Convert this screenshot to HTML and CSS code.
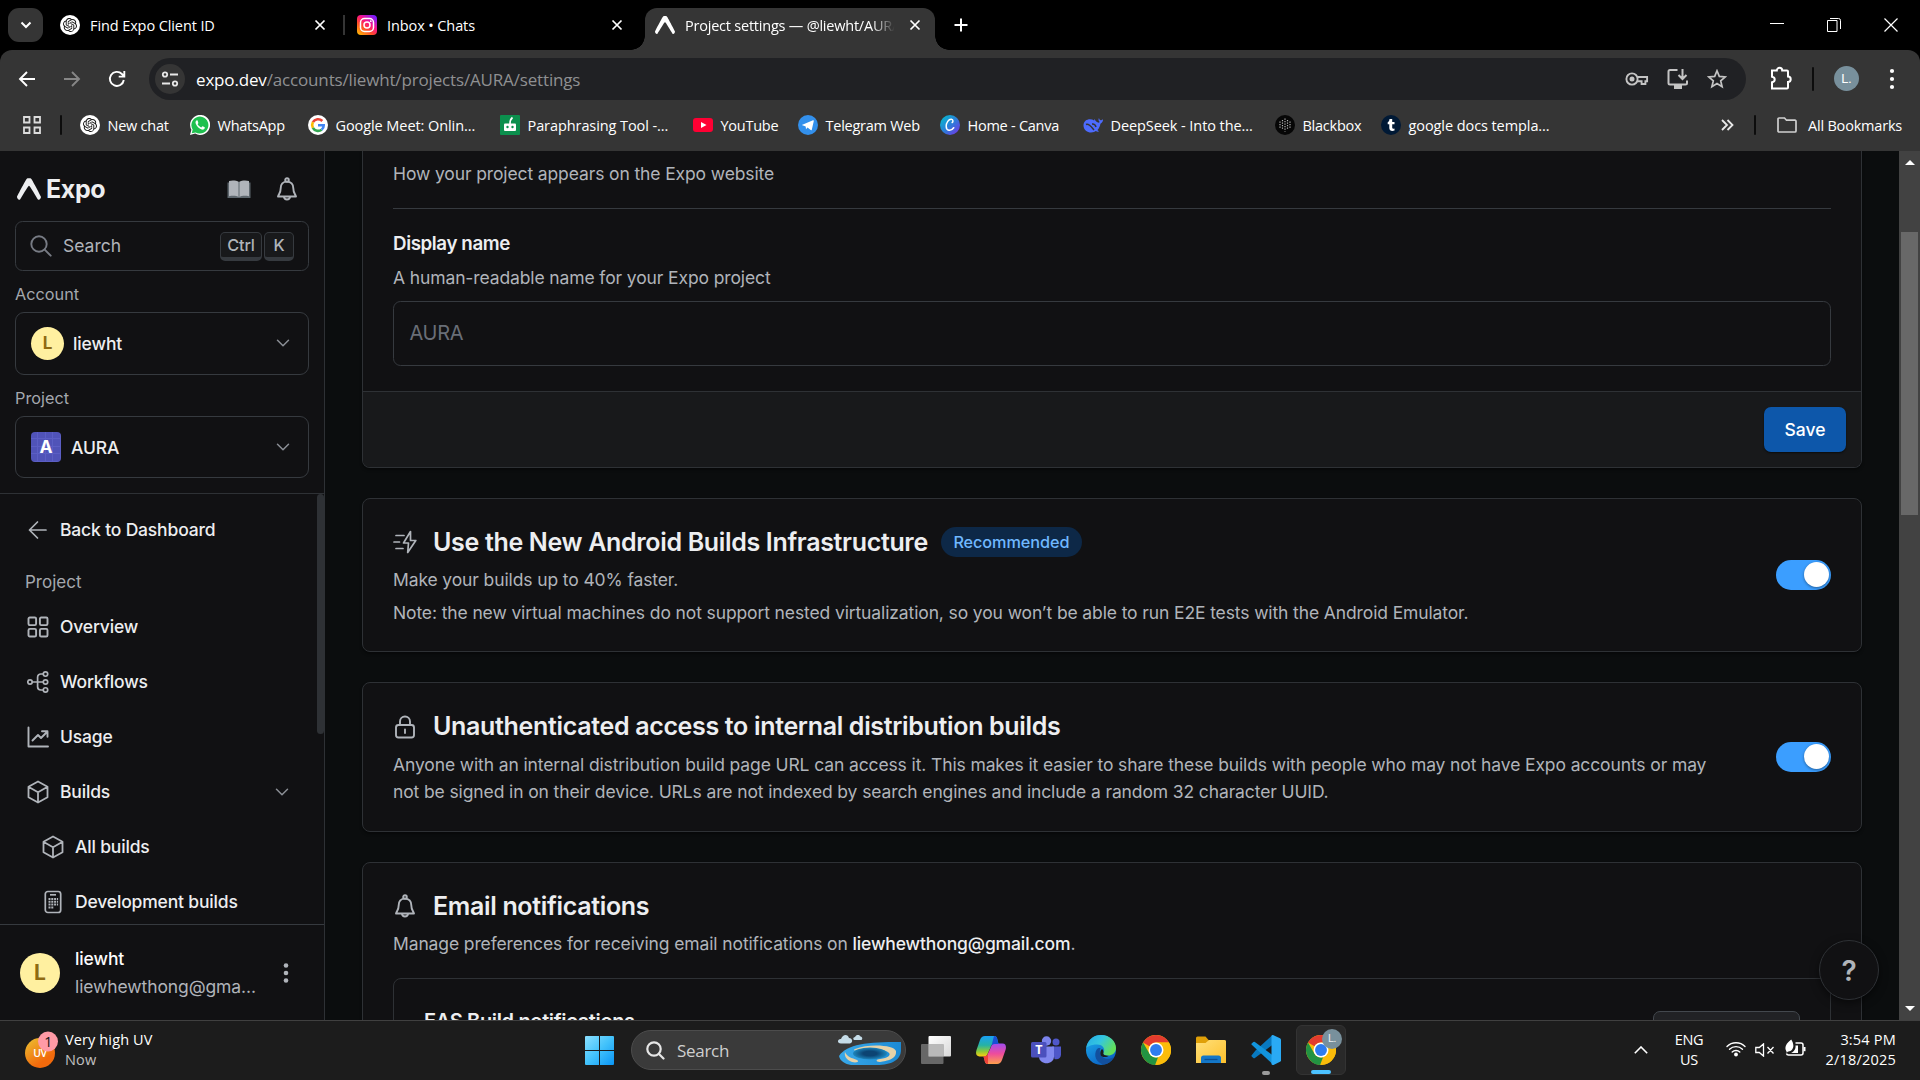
FILE: index.html
```html
<!DOCTYPE html>
<html lang="en">
<head>
<meta charset="utf-8">
<title>Project settings — @liewht/AURA</title>
<link rel="stylesheet" href="styles.css">
</head>
<body>
<svg class="defs" width="0" height="0">
  <defs>
    <linearGradient id="g-ig" x1="0" y1="1" x2=".8" y2="0"><stop offset="0" stop-color="#ffc800"/><stop offset=".4" stop-color="#ff4a2a"/><stop offset=".65" stop-color="#f8128a"/><stop offset="1" stop-color="#7a1cff"/></linearGradient>
    <linearGradient id="g-canva" x1="0" y1="0" x2="1" y2="1"><stop offset="0" stop-color="#00c4cc"/><stop offset=".5" stop-color="#2a7fd8"/><stop offset="1" stop-color="#7d2ae8"/></linearGradient>
    <linearGradient id="g-uv" x1="0" y1="0" x2=".7" y2="1"><stop offset="0" stop-color="#ebc332"/><stop offset=".8" stop-color="#f26a0c"/></linearGradient>
    <linearGradient id="g-win" x1="0" y1="0" x2="1" y2="1"><stop offset="0" stop-color="#8be0ff"/><stop offset=".5" stop-color="#42c2fb"/><stop offset="1" stop-color="#0a95f5"/></linearGradient>
    <linearGradient id="g-cl" x1="0" y1="0" x2="0" y2="1"><stop offset="0" stop-color="#19a0f5"/><stop offset=".45" stop-color="#25b2a5"/><stop offset=".75" stop-color="#8ccb38"/><stop offset="1" stop-color="#ffcd0f"/></linearGradient>
    <linearGradient id="g-cr" x1="0" y1="0" x2="0" y2="1"><stop offset="0" stop-color="#a04cf0"/><stop offset=".5" stop-color="#ee4c9c"/><stop offset="1" stop-color="#ffa04c"/></linearGradient>
    <linearGradient id="g-edge" x1="0" y1="0" x2="1" y2=".5"><stop offset="0" stop-color="#25a9e8"/><stop offset=".5" stop-color="#34c6e0"/><stop offset="1" stop-color="#63e05a"/></linearGradient>
    <linearGradient id="g-edge2" x1="0" y1="0" x2=".6" y2="1"><stop offset="0" stop-color="#1db0ee"/><stop offset="1" stop-color="#0b62c4"/></linearGradient>
    <linearGradient id="g-folder" x1="0" y1="0" x2="1" y2="1"><stop offset="0" stop-color="#ffe07a"/><stop offset="1" stop-color="#fdc02c"/></linearGradient>
    <linearGradient id="g-tv" x1="0" y1="0" x2="1" y2="1"><stop offset="0" stop-color="#fff"/><stop offset="1" stop-color="#d8d8d8"/></linearGradient>
    <linearGradient id="g-sea" x1="0" y1="0" x2="1" y2="0"><stop offset="0" stop-color="#39a9ea"/><stop offset="1" stop-color="#1c8ad4"/></linearGradient>
    <radialGradient id="g-hole"><stop offset=".4" stop-color="#0c4473"/><stop offset="1" stop-color="#1d86bd"/></radialGradient>
    <symbol id="openai" viewBox="0 0 20 20"><circle cx="10" cy="10" r="10" fill="#fff"/><path transform="translate(3 3) scale(.583)" fill="#111" d="M22.2819 9.8211a5.9847 5.9847 0 0 0-.5157-4.9108 6.0462 6.0462 0 0 0-6.5098-2.9A6.0651 6.0651 0 0 0 4.9807 4.1818a5.9847 5.9847 0 0 0-3.9977 2.9 6.0462 6.0462 0 0 0 .7427 7.0966 5.98 5.98 0 0 0 .511 4.9107 6.051 6.051 0 0 0 6.5146 2.9001A5.9847 5.9847 0 0 0 13.2599 24a6.0557 6.0557 0 0 0 5.7718-4.2058 5.9894 5.9894 0 0 0 3.9977-2.9001 6.0557 6.0557 0 0 0-.7475-7.0729zm-9.022 12.6081a4.4755 4.4755 0 0 1-2.8764-1.0408l.1419-.0804 4.7783-2.7582a.7948.7948 0 0 0 .3927-.6813v-6.7369l2.02 1.1686a.071.071 0 0 1 .038.052v5.5826a4.504 4.504 0 0 1-4.4945 4.4944zm-9.6607-4.1254a4.4708 4.4708 0 0 1-.5346-3.0137l.142.0852 4.783 2.7582a.7712.7712 0 0 0 .7806 0l5.8428-3.3685v2.3324a.0804.0804 0 0 1-.0332.0615L9.74 19.9502a4.4992 4.4992 0 0 1-6.1408-1.6464zM2.3408 7.8956a4.485 4.485 0 0 1 2.3655-1.9728V11.6a.7664.7664 0 0 0 .3879.6765l5.8144 3.3543-2.0201 1.1685a.0757.0757 0 0 1-.071 0l-4.8303-2.7865A4.504 4.504 0 0 1 2.3408 7.872zm16.5963 3.8558L13.1038 8.364 15.1192 7.2a.0757.0757 0 0 1 .071 0l4.8303 2.7913a4.4944 4.4944 0 0 1-.6765 8.1042v-5.6772a.79.79 0 0 0-.407-.667zm2.0107-3.0231l-.142-.0852-4.7735-2.7818a.7759.7759 0 0 0-.7854 0L9.409 9.2297V6.8974a.0662.0662 0 0 1 .0284-.0615l4.8303-2.7866a4.4992 4.4992 0 0 1 6.6802 4.66zM8.3065 12.863l-2.02-1.1638a.0804.0804 0 0 1-.038-.0567V6.0742a4.4992 4.4992 0 0 1 7.3757-3.4537l-.142.0805L8.704 5.459a.7948.7948 0 0 0-.3927.6813zm1.0976-2.3654l2.602-1.4998 2.6069 1.4998v2.9994l-2.5974 1.4997-2.6067-1.4997Z"/></symbol>
    <symbol id="expo" viewBox="0 0 24 24"><path fill="currentColor" d="M0 20.084c.043.53.23 1.063.718 1.778.58.849 1.576 1.315 2.303.567.49-.505 5.794-9.776 8.35-13.29a.761.761 0 0 1 1.248 0c2.556 3.514 7.86 12.785 8.35 13.29.727.748 1.723.282 2.303-.567.57-.835.728-1.42.728-2.046 0-.426-8.26-15.798-9.092-17.078-.8-1.23-1.044-1.498-2.397-1.542h-1.032c-1.353.044-1.597.311-2.398 1.542C8.267 3.991.33 18.758 0 19.77Z"/></symbol>
    <symbol id="x" viewBox="0 0 12 12"><path d="M1.5 1.5l9 9M10.5 1.5l-9 9" fill="none" stroke="currentColor" stroke-width="1.7"/></symbol>
    <symbol id="chev" viewBox="0 0 14 14"><path d="M1.5 4.3l5.5 5.4 5.5-5.4" fill="none" stroke="currentColor" stroke-width="1.5" stroke-linecap="round" stroke-linejoin="round"/></symbol>
    <symbol id="bell" viewBox="0 0 24 24"><g fill="none" stroke="currentColor" stroke-width="1.9" stroke-linejoin="round" stroke-linecap="round"><circle cx="12" cy="3" r="1.8"/><path d="M12 4.6c-4 0-6.3 2.8-6.3 6.6 0 4.400-1.700 5.600-2.700 8.300h18c-1-2.700-2.700-3.900-2.700-8.300 0-3.800-2.300-6.600-6.300-6.600zM8.800 19.700c.300 1.900 1.600 2.800 3.200 2.800s2.900-.900 3.200-2.800"/></g></symbol>
    <symbol id="cube" viewBox="0 0 22 24"><path d="M11 1.500l9.500 5.300v10.400L11 22.500l-9.500-5.300V6.800zM1.800 7L11 12.200 20.200 7M11 12.200v10" fill="none" stroke="currentColor" stroke-width="1.800" stroke-linejoin="round"/></symbol>
    <symbol id="chrome" viewBox="0 0 48 48"><circle cx="24" cy="24" r="24" fill="#fbbc0a"/><path fill="#e33b2e" d="M24 0a24 24 0 0 1 20.800 12H24a12 12 0 0 0-10.400 6L3.200 12A24 24 0 0 1 24 0z"/><path fill="#229342" d="M3.200 12l10.400 18A12 12 0 0 0 24 36c1.200 0 2.300-.1 3.300-.5L22.500 48A24 24 0 0 1 3.200 12z"/><path fill="#fbbc0a" d="M24 12h20.800A24 24 0 0 1 24 48l10.400-18a12 12 0 0 0 0-12z"/><circle cx="24" cy="24" r="12" fill="#fff"/><circle cx="24" cy="24" r="9.500" fill="#2e7cf0"/></symbol>
  </defs>
</svg>

<header class="tabstrip">
  <div class="tab-search"><svg width="12" height="12" viewBox="0 0 12 12"><path d="M1.500 3.500L6 8l4.500-4.500" fill="none" stroke="#fff" stroke-width="2"/></svg></div>
  <div class="tab tab-one"><svg class="fav"><use href="#openai"/></svg><span class="tab-title">Find Expo Client ID</span><svg class="tab-x"><use href="#x"/></svg></div>
  <div class="tab-sep"></div>
  <div class="tab tab-two"><svg class="fav" viewBox="0 0 20 20"><rect width="20" height="20" rx="4" fill="url(#g-ig)"/><rect x="3.500" y="3.500" width="13" height="13" rx="4" fill="none" stroke="#fff" stroke-width="1.500"/><circle cx="10" cy="10" r="3" fill="none" stroke="#fff" stroke-width="1.500"/><circle cx="13.800" cy="6.200" r=".9" fill="#fff"/></svg><span class="tab-title">Inbox • Chats</span><svg class="tab-x"><use href="#x"/></svg></div>
  <div class="tab tab-active"><svg class="fav"><use href="#expo"/></svg><span class="tab-title fade">Project settings — @liewht/AURA</span><svg class="tab-x"><use href="#x"/></svg></div>
  <svg class="new-tab" width="14" height="14" viewBox="0 0 14 14"><path d="M7 .5v13M.5 7h13" stroke="#fff" stroke-width="2"/></svg>
  <div class="win-controls">
    <svg width="14" height="14" viewBox="0 0 14 14"><path d="M0 5.500h14" stroke="#fff" stroke-width="1"/></svg>
    <svg width="14" height="14" viewBox="0 0 14 14"><path d="M.5 2.500h9.500v11H.5zM3 .5h8.500a2 2 0 0 1 2 2V11" fill="none" stroke="#fff"/></svg>
    <svg width="14" height="14" viewBox="0 0 14 14"><path d="M.5 .5l13 13M13.500.5l-13 13" stroke="#fff" stroke-width="1.200"/></svg>
  </div>
</header>

<div class="chrome">
  <div class="toolbar">
    <svg class="nav-btn" viewBox="0 0 20 20"><path d="M18 10H3.500M10 3l-7 7 7 7" fill="none" stroke="#fff" stroke-width="1.900"/></svg>
    <svg class="nav-btn" viewBox="0 0 20 20"><path d="M2 10h14.500M10 3l7 7-7 7" fill="none" stroke="#868686" stroke-width="1.900"/></svg>
    <svg class="nav-btn" viewBox="0 0 20 20"><path d="M16.800 11a7 7 0 1 1-1.900-6l2 2.200M17.300 2v5.600h-5.600" fill="none" stroke="#fff" stroke-width="1.900"/></svg>
    <div class="omnibox">
      <span class="site-info"><svg width="18" height="18" viewBox="0 0 18 18"><g fill="none" stroke="#e8e8e8" stroke-width="1.800"><circle cx="4" cy="4.500" r="2.200"/><circle cx="14" cy="13.500" r="2.200"/><path d="M9 4.500h8M1 13.500h8"/></g></svg></span>
      <span class="url"><b>expo.dev</b>/accounts/liewht/projects/AURA/settings</span>
      <span class="omni-icons">
        <svg width="24" height="20" viewBox="0 0 24 20"><g fill="none" stroke="#c4c4c4" stroke-width="1.900"><path d="M12.400 8h9.700v4.300h-1.700V15h-3.800v-2.800h-4.200"/><circle cx="7" cy="10" r="5.600"/></g><circle cx="7" cy="10" r="2.500" fill="#c4c4c4"/></svg>
        <svg width="22" height="22" viewBox="0 0 22 22"><path d="M10.500 2H3a1.500 1.500 0 0 0-1.500 1.500v11.500A1.500 1.500 0 0 0 3 16.500h15.500A1.500 1.500 0 0 0 20 15v-2.500M15.500 1v9.500M11.500 7l4 4 4-4" fill="none" stroke="#c4c4c4" stroke-width="2"/><path d="M7 17h8v4H7z" fill="#c4c4c4"/></svg>
        <svg width="20" height="20" viewBox="0 0 20 20"><path d="M10 1.800l2.300 5.600 6 .5-4.600 3.900 1.400 5.900-5.100-3.200-5.100 3.200 1.400-5.900L1.700 7.900l6-.5z" fill="none" stroke="#c4c4c4" stroke-width="1.700"/></svg>
      </span>
    </div>
    <svg class="ext" width="22" height="24" viewBox="0 0 22 24"><path d="M2 4.500h4.800a2.700 2.700 0 0 1 5.400 0H17a1 1 0 0 1 1 1v5a2.700 2.700 0 0 1 0 5.400v5.600a1 1 0 0 1-1 1H2v-6.200c3.600-.6 3.600-5 0-5.600z" fill="none" stroke="#fff" stroke-width="2"/></svg>
    <i class="vbar"></i>
    <span class="profile">L.</span>
    <svg class="menu" width="6" height="22" viewBox="0 0 6 22" fill="#fff"><circle cx="3" cy="3" r="2.100"/><circle cx="3" cy="11" r="2.100"/><circle cx="3" cy="19" r="2.100"/></svg>
  </div>
  <div class="bookmarks">
    <svg class="apps" width="18" height="18" viewBox="0 0 18 18"><g fill="none" stroke="#dcdcdc" stroke-width="1.800"><path d="M1 1h5.500v5.500H1zM11.500 1H17v5.500h-5.500zM1 11.500h5.500V17H1zM11.500 11.500H17V17h-5.500z"/></g></svg>
    <i class="vbar"></i>
    <div class="bm-list">
      <span class="bm"><svg class="fav"><use href="#openai"/></svg>New chat</span>
      <span class="bm"><svg class="fav" viewBox="0 0 20 20"><path fill="#fff" d="M0 20l1.400-5.200A10 10 0 1 1 5.200 18.600z"/><path fill="#1fc04f" d="M1.700 18.300l1-3.700a8.500 8.500 0 1 1 2.900 2.800z"/><path fill="#fff" d="M7 5.200c-1.500.6-1.800 2.200-1.200 3.600 1 2.600 3 4.700 5.900 5.700 1.500.5 2.900-.2 3.200-1.700 0-.5-.2-.6-2.400-1.600-.5-.1-.7.900-1.300 1.200-1.700-.7-2.800-1.800-3.600-3.200.3-.5.9-.9.700-1.400L7.600 5.500z"/></svg>WhatsApp</span>
      <span class="bm cut"><svg class="fav" viewBox="0 0 20 20"><circle cx="10" cy="10" r="10" fill="#fff"/><g fill="none" stroke-width="2.600"><path d="M14.300 6A5.900 5.900 0 0 0 4.900 7.200" stroke="#ea4335"/><path d="M4.900 7.200a5.900 5.900 0 0 0 0 5.600" stroke="#fbbc05"/><path d="M4.900 12.800a5.900 5.900 0 0 0 8.700 1.900" stroke="#34a853"/><path d="M13.600 14.700A5.500 5.500 0 0 0 15.700 10.200H10" stroke="#4285f4"/></g></svg>Google Meet: Onlin...</span>
      <span class="bm cut"><svg class="fav" viewBox="0 0 20 20"><rect width="20" height="20" rx="1" fill="#0b8f4d"/><path d="M10 9c0-3 .5-5 2.500-6.500" stroke="#fff" stroke-width="1.700" fill="none"/><rect x="4" y="8.500" width="12" height="7.500" rx="1" fill="#fff"/><circle cx="7.500" cy="12" r="1.200" fill="#0b8f4d"/><circle cx="12.500" cy="12" r="1.200" fill="#0b8f4d"/></svg>Paraphrasing Tool -...</span>
      <span class="bm"><svg class="fav" viewBox="0 0 20 20"><rect y="3" width="20" height="14" rx="3" fill="#f03"/><path d="M8 7l5.500 3L8 13z" fill="#fff"/></svg>YouTube</span>
      <span class="bm"><svg class="fav" viewBox="0 0 20 20"><circle cx="10" cy="10" r="10" fill="#3390ec"/><path fill="#fff" d="M3.800 10L15 5.300c.600-.200.900.100.800.700l-2 8.700c-.200.600-.600.700-1.100.4l-3.200-2.500L8 14.300l-.300-2.900z"/></svg>Telegram Web</span>
      <span class="bm"><svg class="fav" viewBox="0 0 20 20"><circle cx="10" cy="10" r="10" fill="url(#g-canva)"/><path d="M12.200 7.500c1-.6 1.200-3-.8-3.200C8.600 4 6.200 7.800 6.200 11.200c0 5 4.800 5.300 7.500 1.500" fill="none" stroke="#fff" stroke-width="1.500" stroke-linecap="round"/></svg>Home - Canva</span>
      <span class="bm cut"><svg class="fav" viewBox="0 0 20 20"><path fill="#4d6bfe" d="M20 4.500c-.8 0-1 .6-1.800.8-1.500.2-2-1.300-2.200-2.200-.9 1.400-.5 3 .7 3.900-.5.500-1 .8-1.700.6C12.500 6.500 12.400 4.900 11 4c.2.600.3 1 .2 1.500C7 3 .500 4.500.500 10.500c0 4.500 4 7 7.500 7 2.400 0 3.800-.9 4.800-1.500 1 .6 2.600 1 3.200.3-.4-.4-1.200-.6-1.500-1.300 1.500-1.800 2.700-3.900 2.900-6.300C19 8 20 6.500 20 4.500z"/><path d="M3 9.500c3-1.500 5.500 2.500 8 5.500M9 9c2-.2 3.500 1 4 3" fill="none" stroke="#353535" stroke-width="1.500"/></svg>DeepSeek - Into the...</span>
      <span class="bm"><svg class="fav" viewBox="0 0 20 20"><circle cx="10" cy="10" r="10" fill="#060606"/><g stroke="#b0b0b0" stroke-width="1.200" stroke-dasharray="1.200 1.300" fill="none"><path d="M5 6.500v7M7.500 5v10M10 3.500v13M12.500 5v10M15 6.500v7"/></g></svg>Blackbox</span>
      <span class="bm cut"><svg class="fav" viewBox="0 0 20 20"><circle cx="10" cy="10" r="10" fill="#001935"/><path fill="#fff" d="M8.500 4h2.700v3h2.300v2.200h-2.300v3.300c0 1.200.9 1.400 2.300 1v2c-2.600 1-5.200.3-5.200-2.400V9.200H6.700V7.300C7.800 6.900 8.400 5.600 8.500 4z"/></svg>google docs templa...</span>
    </div>
    <svg class="more" width="13" height="12" viewBox="0 0 13 12"><path d="M1 1l5 5-5 5M6.500 1l5 5-5 5" fill="none" stroke="#e8e8e8" stroke-width="1.800"/></svg>
    <i class="vbar"></i>
    <svg class="folder" width="20" height="16" viewBox="0 0 20 16"><path d="M1 2a1 1 0 0 1 1-1h5.500l2 2.200H18a1 1 0 0 1 1 1V14a1 1 0 0 1-1 1H2a1 1 0 0 1-1-1z" fill="none" stroke="#cfcfcf" stroke-width="1.700"/></svg>
    <span class="all-bm">All Bookmarks</span>
  </div>
</div>

<div class="page">
  <aside class="sidebar">
    <div class="brand">
      <svg class="brand-mark"><use href="#expo"/></svg><span class="brand-name">Expo</span>
      <svg class="book" width="24" height="20" viewBox="0 0 24 20"><path d="M.5 3.500h23V19h-23z" fill="#5d666d"/><path d="M2 2c3-.9 7-.8 10 1 3-1.800 7-1.900 10-1v15.300c-4-.8-7.500-.5-10 1-2.500-1.500-6-1.800-10-1z" fill="#b0b4ba"/><path d="M12 3v15.500" stroke="#5d666d"/></svg>
      <svg class="bell-top"><use href="#bell"/></svg>
    </div>
    <div class="search"><svg width="22" height="22" viewBox="0 0 22 22"><g fill="none" stroke="#777b84" stroke-width="1.900" stroke-linecap="round"><circle cx="9" cy="9" r="7.700"/><path d="M14.700 14.700l6 6"/></g></svg><span>Search</span><kbd class="k-ctrl">Ctrl</kbd><kbd class="k-k">K</kbd></div>
    <div class="label">Account</div>
    <div class="select sel-account"><span class="avatar round">L</span><b>liewht</b><svg class="chev"><use href="#chev"/></svg></div>
    <div class="label">Project</div>
    <div class="select sel-project"><span class="avatar square">A</span><b>AURA</b><svg class="chev"><use href="#chev"/></svg></div>
    <nav class="nav">
      <a class="item"><svg class="ico" viewBox="0 0 22 22"><path d="M19 11H2.500M10.500 3l-8 8 8 8" fill="none" stroke="currentColor" stroke-width="1.700" stroke-linecap="round" stroke-linejoin="round"/></svg>Back to Dashboard</a>
      <div class="group">Project</div>
      <a class="item"><svg class="ico" viewBox="0 0 22 22"><g fill="none" stroke="currentColor" stroke-width="1.900"><rect x="1.500" y="1.500" width="7.600" height="7.600" rx="1.300"/><rect x="12.900" y="1.500" width="7.600" height="7.600" rx="1.300"/><rect x="1.500" y="12.900" width="7.600" height="7.600" rx="1.300"/><rect x="12.900" y="12.900" width="7.600" height="7.600" rx="1.300"/></g></svg>Overview</a>
      <a class="item"><svg class="ico" viewBox="0 0 22 22"><g fill="none" stroke="currentColor" stroke-width="1.700"><circle cx="3" cy="11" r="2.200"/><circle cx="18.500" cy="11" r="2.200"/><circle cx="18.500" cy="3.050" r="2.200"/><circle cx="18.500" cy="18.950" r="2.200"/><path d="M5.500 11h10.500M16 3h-2.200a3.200 3.200 0 0 0-3.200 3.200v9.600a3.200 3.200 0 0 0 3.200 3.200H16"/></g></svg>Workflows</a>
      <a class="item"><svg class="ico" viewBox="0 0 22 22"><path d="M1.500 1.500v19h19.500M5.500 14.500l5.500-5.500 3 3 6.500-6.500M15 5.300h5.500v5.500" fill="none" stroke="currentColor" stroke-width="1.900" stroke-linecap="round" stroke-linejoin="round"/></svg>Usage</a>
      <a class="item"><svg class="ico tall"><use href="#cube"/></svg>Builds<svg class="chev"><use href="#chev"/></svg></a>
      <a class="item sub"><svg class="ico tall"><use href="#cube"/></svg>All builds</a>
      <a class="item sub"><svg class="ico tall" viewBox="0 0 22 24"><rect x="3.300" y="1.500" width="15.400" height="21" rx="2.500" fill="none" stroke="currentColor" stroke-width="1.700"/><path d="M8 4.800h6" stroke="currentColor" stroke-width="1.700"/><g stroke="currentColor" stroke-width="2" stroke-dasharray="2 .8"><path d="M6.500 9h9.600M6.500 11.800h9.600M6.500 14.600h9.600M6.500 17.400h5.600"/></g></svg>Development builds</a>
      <i class="nav-scroll"></i>
    </nav>
    <div class="user"><span class="avatar round big">L</span><div class="who"><b>liewht</b><span>liewhewthong@gma...</span></div><svg width="6" height="20" viewBox="0 0 6 20" fill="#b0b4ba"><circle cx="3" cy="2.500" r="2.300"/><circle cx="3" cy="10" r="2.300"/><circle cx="3" cy="17.500" r="2.300"/></svg></div>
  </aside>

  <main class="main">
    <section class="card card-name">
      <div class="card-pad">
        <p class="desc">How your project appears on the Expo website</p>
        <hr>
        <h3 class="field-title">Display name</h3>
        <p class="desc field-desc">A human-readable name for your Expo project</p>
        <div class="input">AURA</div>
      </div>
      <div class="card-foot"><button class="save">Save</button></div>
    </section>

    <section class="card card-infra">
      <div class="copy">
        <h2><svg class="h-ico" viewBox="0 0 24 24"><g fill="none" stroke="#b0b4ba" stroke-width="1.700" stroke-linecap="round" stroke-linejoin="round"><path d="M17.500 1.500L10.500 13h5l-.8 9.500L22.800 10.500h-5.300z"/><path d="M3 5.500h8M1 12h5.500M3 18.500h7"/></g></svg>Use the New Android Builds Infrastructure <span class="badge">Recommended</span></h2>
        <p class="desc">Make your builds up to 40% faster.</p>
        <p class="desc note">Note: the new virtual machines do not support nested virtualization, so you won’t be able to run E2E tests with the Android Emulator.</p>
      </div>
      <span class="toggle"></span>
    </section>

    <section class="card card-access">
      <div class="copy">
        <h2><svg class="h-ico lock-ico" viewBox="0 0 24 24"><g fill="none" stroke="#b0b4ba" stroke-width="1.900" stroke-linecap="round"><rect x="3" y="10" width="18" height="12.500" rx="2.500"/><path d="M7 10V6.500a5 5 0 0 1 10 0V10M12 14.500v3.500"/></g></svg>Unauthenticated access to internal distribution builds</h2>
        <p class="desc">Anyone with an internal distribution build page URL can access it. This makes it easier to share these builds with people who may not have Expo accounts or may<br>not be signed in on their device. URLs are not indexed by search engines and include a random 32 character UUID.</p>
      </div>
      <span class="toggle"></span>
    </section>

    <section class="card card-email">
      <h2><svg class="h-ico bell-ico"><use href="#bell"/></svg>Email notifications</h2>
      <p class="desc">Manage preferences for receiving email notifications on <b>liewhewthong@gmail.com</b>.</p>
      <div class="subcard"><h3 class="sub-title">EAS Build notifications</h3><span class="sub-btn"></span></div>
    </section>
  </main>
  <div class="scrollbar"><i class="up"></i><i class="thumb"></i><i class="down"></i></div>
  <div class="help">?</div>
</div>

<footer class="taskbar">
  <div class="weather">
    <svg width="36" height="38" viewBox="0 0 36 38"><circle cx="16" cy="22" r="15" fill="url(#g-uv)"/><text x="16" y="25.500" class="uv">UV</text><circle cx="24" cy="10.500" r="10" fill="#ff9aa6"/><text x="24" y="16" class="uv-count">1</text></svg>
    <div class="weather-text"><span>Very high UV</span><span class="dim">Now</span></div>
  </div>
  <svg class="start" width="29" height="29" viewBox="0 0 29 29"><path fill="url(#g-win)" d="M1 0h13v14H0V1a1 1 0 0 1 1-1zM15 0h13a1 1 0 0 1 1 1v13H15zM0 15h14v14H1a1 1 0 0 1-1-1zM15 15h14v13a1 1 0 0 1-1 1H15z"/></svg>
  <div class="tsearch">
    <svg width="19" height="19" viewBox="0 0 19 19"><g fill="none" stroke="#e6e6e6" stroke-width="2.200" stroke-linecap="round"><circle cx="8" cy="8" r="6.700"/><path d="M13 13l4.500 4.500"/></g></svg><span>Search</span>
    <svg class="lagoon" width="66" height="32" viewBox="0 0 66 32"><path d="M2 22C10 10 30 8 64 8v8c0 10-10 15-24 15H14C8 30 3 27 2 22z" fill="url(#g-sea)"/><path d="M18 15c14-6 40-4 41 2 1 8-9 10-16 11-5 0-4-3 0-3 8-1 11-4 9-6-4-5-20-4-32-3-3 1-4 0-2-1zM8 18c2 5 7 6 12 8 3 2-1 3-5 2-6-2-8-7-7-10z" fill="#e6d2a8"/><ellipse cx="33" cy="19.500" rx="17" ry="6" fill="url(#g-hole)"/><path d="M4 9.500c-5-.5-3-5 0-4.500C6-.5 11 0 12 4c4 0 4 5 1 5.500zM18 6c-3-.5-1.500-3 0-3 1-3 5-2.500 5.500-.5 2.500.5 2 3.500.5 3.500z" fill="#c5dce8"/></svg>
  </div>
  <div class="apps-row">
    <span class="slot"><svg width="30" height="28" viewBox="0 0 30 28"><rect x="7.500" width="22.500" height="20.500" rx="1" fill="url(#g-tv)"/><rect y="8" width="22.500" height="20" rx="1" fill="#777" fill-opacity=".82"/><rect x="7.500" y="8" width="15" height="12.500" fill="#b9b9b9"/></svg></span>
    <span class="slot"><svg width="30" height="28" viewBox="0 0 30 28"><path d="M9 0h9c2.500 0 3 1.500 3.500 4l1 4h-4c-2.500 0-3.500 1.500-4 3.500L12 17c-.700 2.500-2 3.500-4.500 3.500H3.500C0 20.500-.5 17.500.5 14L4 4c1-2.800 2.500-4 5-4z" fill="url(#g-cl)"/><path d="M21 28h-9c-2.500 0-3-1.500-3.500-4l-1-3.500c3 0 4-1 4.700-3.500L15 11c.600-2 1.500-3.500 4-3.500h7.500c3.500 0 4 3 3 6.500L26 24c-1 2.800-2.500 4-5 4z" fill="url(#g-cr)"/><path d="M18 0c2.500 0 3 1.500 3.500 4l1 4h-4c-1.500 0-2.500.8-3 1.800z" fill="#1a4fd6"/><path d="M12 28c-2.500 0-3-1.500-3.500-4l-1-3.500c2.500 0 4-1 4.500-2.700z" fill="#f0433a"/></svg></span>
    <span class="slot"><svg width="30" height="28" viewBox="0 0 30 28"><circle cx="25" cy="6" r="3.500" fill="#4f57c9"/><circle cx="15.500" cy="5" r="4.700" fill="#7b83eb"/><path d="M21 10.500h9v8c0 3.500-3 5.500-6.500 4.500z" fill="#4f57c9"/><path d="M8 10.500h15v10c0 9-15 9-15 0z" fill="#8087ee"/><rect y="6" width="15.500" height="15.500" rx="1.500" fill="#4b50bd"/><text x="7.800" y="18" class="teams">T</text></svg></span>
    <span class="slot"><svg width="30" height="30" viewBox="0 0 30 30"><circle cx="15" cy="15" r="15" fill="url(#g-edge2)"/><path d="M.2 13C2 4 8 0 15 0c9 0 15 6.500 15 13 0 5-4 7.500-8 7.500-3 0-5.500-1-4.500-3 2-3 0-8-6.500-8S1 12 .2 13z" fill="url(#g-edge)"/><path d="M11 14c-4 6-1 14 7 15.500 4-.5 8-3.500 10-7.500-4 2.500-9 2.500-12-.5-2-2-3-5-1.500-8.500-1.500-.3-2.800.2-3.500 1z" fill="#12509e"/><path d="M17.500 17.500c-1 2 1.500 3.300 5 3.300-.5 1-4 2-6.500.7-2-1.300-2.500-5 0-7.500 1.300 1 1.500 2.500 1.500 3.500z" fill="#1c1c1c"/></svg></span>
    <span class="slot"><svg width="30" height="30"><use href="#chrome"/></svg></span>
    <span class="slot"><svg width="30" height="28" viewBox="0 0 30 28"><path d="M0 2a1.500 1.500 0 0 1 1.500-1.500H9.500L13 4.500h16a1 1 0 0 1 1 1V10H0z" fill="#e0a008"/><path d="M0 7h9.500L13 4h15.500A1.500 1.500 0 0 1 30 5.500V27H0z" fill="url(#g-folder)"/><path d="M5 27v-5a2.500 2.500 0 0 1 2.500-2.500h15A2.500 2.500 0 0 1 25 22v5z" fill="#1477c8"/><path d="M8.500 23.500h13" stroke="#0b4f94" stroke-width="1.300"/></svg></span>
    <span class="slot"><svg width="30" height="30" viewBox="0 0 30 30"><path d="M21.500 0l-17 15.500L.7 20.200a1 1 0 0 0 0 1.300l1.600 1.500a1.300 1.300 0 0 0 1.600.1L22 9.500z" fill="#0879c0"/><path d="M22.500 30L.7 9.800a1 1 0 0 1 0-1.300L2.300 7a1.300 1.300 0 0 1 1.600-.1L22 20.500z" fill="#1294dc"/><path d="M22 0l7 3.200a1.800 1.800 0 0 1 1 1.600v20.400a1.800 1.800 0 0 1-1 1.600L22.500 30c-1 .3-2-.5-2-1V1c0-.6.800-1.200 1.500-1z" fill="#2aaaf4"/></svg><i class="dot"></i></span>
    <span class="slot current"><svg width="30" height="30"><use href="#chrome"/></svg><em>L.</em><i class="dot"></i></span>
  </div>
  <div class="tray">
    <svg class="t-up" width="14" height="8" viewBox="0 0 14 8"><path d="M.8 7.200L7 1l6.200 6.200" fill="none" stroke="#fff" stroke-width="1.600"/></svg>
    <div class="lang"><span>ENG</span><span>US</span></div>
    <svg class="t-wifi" width="20" height="16" viewBox="0 0 20 16"><g fill="none" stroke="#fff" stroke-width="1.400" stroke-linecap="round"><path d="M1 5.500a12.800 12.800 0 0 1 18 0M3.500 8.300a9.200 9.200 0 0 1 13 0M6.200 11a5.400 5.400 0 0 1 7.600 0"/></g><circle cx="10" cy="13.500" r="1.900" fill="#fff"/></svg>
    <svg class="t-vol" width="20" height="14" viewBox="0 0 20 14"><path d="M.8 4.500h3.500L8.500.9v12.200L4.300 9.500H.8zM12.500 4l6 6.500M18.500 4l-6 6.500" fill="none" stroke="#fff" stroke-width="1.300"/></svg>
    <svg class="t-bat" width="21" height="18" viewBox="0 0 21 18"><path d="M10.500 4H16a2 2 0 0 1 2 2v8a2 2 0 0 1-2 2H3.500a2 2 0 0 1-2-1.500" fill="none" stroke="#fff" stroke-width="1.500"/><path d="M18.500 8h2v4.200h-2z" fill="#fff"/><path d="M1 14.500c1-1 .8-1.500.2-2.500C-.8 8.500 1 4.500 6.200.5 8.500 4 9.500 8.500 6.500 11.200c-1.500 1.200-3 .8-3.800 1.600z" fill="#fff"/><path d="M6 14h7V6.500h-2.500C11 10 9 12.500 6 14z" fill="#fff"/></svg>
    <div class="clock"><span>3:54 PM</span><span>2/18/2025</span></div>
  </div>
</footer>
</body>
</html>
```
FILE: styles.css
```css
* { box-sizing: border-box; }
body, p, h2, h3, hr { margin: 0; }
body {
  width: 1920px; height: 1080px; overflow: hidden;
  display: flex; flex-direction: column;
  background: #000; color: #fff;
  font-family: "Open Sans", "Noto Sans", sans-serif; font-size: 15px;
}
.defs { position: absolute; }
svg { flex: none; display: block; }
.fav { width: 20px; height: 20px; }

/* tab strip */
.tabstrip { height: 50px; flex: none; display: flex; align-items: center; padding-left: 8px; }
.tab-search { width: 35px; height: 34px; border-radius: 11px; background: #353535; display: flex; align-items: center; justify-content: center; }
.tab { display: flex; align-items: center; gap: 10px; height: 42px; }
.tab-one { margin-left: 17px; width: 266px; }
.tab-two { margin-left: 12px; width: 266px; }
.tab-title { flex: 1; white-space: nowrap; overflow: hidden; font-size: 14.5px; letter-spacing: -0.1px; }
.tab-x { width: 12px; height: 12px; }
.tab-sep { width: 2px; height: 20px; margin-left: 17px; background: #353535; }
.tab-active { position: relative; align-self: flex-end; margin-left: 22px; padding: 0 14px 8px 10px; width: 290px; background: #353535; border-radius: 12px 12px 0 0; }
.tab-active .tab-title { letter-spacing: -0.22px; }
.tab-active::before, .tab-active::after { content: ""; position: absolute; bottom: 0; width: 14px; height: 14px; }
.tab-active::before { left: -14px; background: radial-gradient(circle at 0 0, transparent 13.5px, #353535 14px); }
.tab-active::after { right: -14px; background: radial-gradient(circle at 100% 0, transparent 13.5px, #353535 14px); }
.fade { -webkit-mask-image: linear-gradient(90deg, #000 87%, transparent 98%); mask-image: linear-gradient(90deg, #000 87%, transparent 98%); }
.new-tab { margin-left: 19px; }
.win-controls { margin-left: auto; display: flex; gap: 43px; padding-right: 22px; }

/* toolbar and bookmarks */
.chrome { height: 101px; flex: none; background: #353535; border-radius: 12px 12px 0 0; padding-top: 8px; }
.toolbar { height: 42px; display: flex; align-items: center; padding-left: 17px; }
.nav-btn { width: 20px; height: 20px; margin-right: 25px; }
.toolbar > .nav-btn { margin-top: -1px; }
.omnibox { width: 1597px; height: 42px; margin-left: -3px; border-radius: 21px; background: #202124; display: flex; align-items: center; padding: 0 19px 0 6px; }
.site-info { width: 30px; height: 30px; border-radius: 50%; background: #353535; display: flex; align-items: center; justify-content: center; }
.url { margin-left: 11px; font-size: 17px; letter-spacing: -0.16px; color: #8f9092; }
.url b { font-weight: 400; color: #fff; }
.omni-icons { margin-left: auto; display: flex; align-items: center; gap: 18px; }
.ext { margin-left: 24px; margin-top: -3px; }
.vbar { width: 2px; height: 20px; background: #0c0c0c; border-radius: 1px; }
.toolbar .vbar { margin-left: 20px; height: 24px; }
.profile { margin-left: 20px; width: 25px; height: 25px; border-radius: 50%; background: #78909c; text-align: center; font: 13px/25px Roboto, sans-serif; margin-top: -1px; }
.menu { margin-left: 30px; }
.bookmarks { height: 50px; display: flex; align-items: center; padding-left: 23px; font-size: 14.5px; letter-spacing: -0.25px; }
.bookmarks .vbar { margin-left: 19px; }
.bm-list { margin-left: 18px; width: 1625px; display: grid; grid-template-columns: 110px 118px 192px 193px 105px 142px 143px 192px 106px 200px; }
.bm { display: flex; align-items: center; gap: 7.500px; white-space: nowrap; }
.cut { letter-spacing: -0.08px; }
.more { margin-left: 16px; }
.bookmarks .more + .vbar { margin-left: 20px; }
.folder { margin-left: 21px; }
.all-bm { margin-left: 11px; white-space: nowrap; letter-spacing: -0.2px; }

/* page */
.page { height: 869px; flex: none; display: flex; position: relative; background: #0b0d0e; font-family: Inter, sans-serif; font-size: 17.5px; color: #edeef0; overflow: hidden; }
.sidebar { width: 325px; background: #111113; border-right: 1px solid #2e3135; display: flex; flex-direction: column; letter-spacing: -0.1px; }
.sidebar b { font-weight: 500; }
.brand { height: 38px; margin: 19px 0 0 17px; display: flex; align-items: center; }
.brand-mark { width: 24px; height: 24px; }
.brand-name { margin-left: 5px; width: 64px; font-weight: 700; font-size: 25px; letter-spacing: -0.4px; }
.book { margin-left: 117px; }
.bell-top { width: 24px; height: 24px; margin-left: 23.500px; color: #b0b4ba; }
.search { margin: 13px 15px 0; height: 50px; padding: 0 14px 1px 14px; border: 1px solid #363a3f; border-radius: 7.500px; display: flex; align-items: center; color: #b0b4ba; }
.search span { margin-left: 11px; flex: 1; letter-spacing: 0; }
kbd { height: 29px; margin-top: 2px; border: 1px solid #363a3f; border-bottom-width: 4px; border-radius: 5px; background: #18191b; font: 500 16.250px/24px Inter, sans-serif; text-align: center; }
.k-ctrl { width: 42px; }
.k-k { width: 30px; margin-left: 2px; }
.label { height: 41px; padding: 11px 15px 0; line-height: 24px; font-size: 16.250px; letter-spacing: 0; color: #a4a8ae; }
.select { margin: 0 15px; height: 63px; padding: 0 18px 0 15px; border: 1px solid #363a3f; border-radius: 9px; display: flex; align-items: center; }
.sel-project { height: 62px; }
.sel-project b { margin-left: 10px; }
.avatar { flex: none; text-align: center; font-weight: 700; }
.avatar.round { width: 33px; height: 33px; border-radius: 50%; background: #fff0a0; color: #8f6b12; line-height: 33px; font-size: 17px; }
.avatar.big { width: 40px; height: 40px; line-height: 40px; font-size: 21px; }
.avatar.square { width: 30px; height: 30px; border-radius: 4px; line-height: 30px; color: #fff; background: repeating-linear-gradient(90deg, transparent 0 6.500px, #5b5ec4 6.500px 7.500px), repeating-linear-gradient(transparent 0 6.500px, #5b5ec4 6.500px 7.500px), #5053b8; }
.select b { margin-left: 9px; flex: 1; }
.select .chev { margin-top: -1px; }
.sel-project b { margin-left: 10px; }
.chev { width: 14px; height: 14px; color: #8b8f96; }
.nav { position: relative; margin-top: 15px; height: 431px; border-top: 1px solid #2e3135; padding: 8px 0 0 26.500px; overflow: hidden; }
.item { height: 55px; display: flex; align-items: center; font-weight: 500; letter-spacing: -0.17px; }
.ico { width: 22px; height: 22px; margin-right: 11.500px; color: #b0b4ba; }
.ico.tall { height: 24px; }
.item .chev { margin-left: auto; margin-right: 35px; }
.group { height: 42px; line-height: 50px; font-size: 17px; margin-left: -1.500px; color: #a4a8ae; letter-spacing: 0; }
.item.sub { padding-left: 15px; }
.nav-scroll { position: absolute; right: 0; top: 0; width: 7px; height: 240px; border-radius: 4px; background: #2e3135; }
.user { flex: 1; border-top: 1px solid #363a3f; display: flex; align-items: center; padding: 0 35px 0 20px; }
.who { margin-left: 15px; width: 190px; display: flex; flex-direction: column; line-height: 28px; color: #b0b4ba; }
.who b { color: #fcfcfd; }
.user svg { margin-left: 18.500px; }

.main { width: 1574px; padding-left: 37px; display: flex; flex-direction: column; gap: 30px; }
.card { flex: none; width: 1500px; border: 1px solid #2e3135; border-radius: 8px; background: #111113; box-shadow: 0 2px 3px rgba(0, 0, 0, .4); }
.card-name { height: 317px; border-top: 0; border-radius: 0 0 8px 8px; overflow: hidden; display: flex; flex-direction: column; }
.card-pad { padding: 9px 30px 0; flex: 1; }
.desc { line-height: 27px; color: #b0b4ba; white-space: nowrap; letter-spacing: -0.12px; }
.desc b { font-weight: 500; color: #edeef0; }
hr { margin-top: 21px; border: 0; height: 1px; background: #363a3f; }
.field-title { margin-top: 21px; font-size: 18.750px; line-height: 28px; font-weight: 600; letter-spacing: -0.4px; }
.field-desc { margin-top: 6px; }
.input { margin-top: 10px; height: 65px; padding-left: 15.500px; border: 1px solid #363a3f; border-radius: 7.500px; font-size: 20px; line-height: 62px; letter-spacing: -0.3px; color: #696e77; }
.card-foot { height: 76px; border-top: 1px solid #2e3135; background: #18191b; display: flex; justify-content: flex-end; padding: 15px 15px 0 0; }
.save { width: 82px; height: 45px; border: 0; border-radius: 7px; background: #0d57aa; color: #fff; font: 500 17.500px Inter, sans-serif; box-shadow: 0 1px 2px rgba(0, 0, 0, .6); }
.card-infra, .card-access { padding: 28px 30px 0; display: flex; }
.card-infra { height: 154px; }
.card-access { height: 150px; }
h2 { height: 30px; margin-bottom: 10px; display: flex; align-items: center; font-size: 25px; font-weight: 600; letter-spacing: -0.33px; white-space: nowrap; }
.card-infra h2, .card-email h2 { margin-bottom: 9px; }
.h-ico { width: 24px; height: 24px; margin-right: 16px; }
.lock-ico { margin-top: 2px; }
.bell-ico { color: #b0b4ba; }
.badge { margin-left: 13px; width: 141px; height: 30px; border-radius: 15px; background: #0d2847; color: #70b8ff; font-size: 16.250px; font-weight: 500; letter-spacing: -0.08px; text-align: center; line-height: 30px; }
.note { margin-top: 6px; }
.toggle { margin-left: auto; margin-top: 33px; width: 55px; height: 30px; border-radius: 15px; background: #3b9eff; padding: 2px; display: flex; justify-content: flex-end; }
.card-access .toggle { margin-top: 31px; }
.toggle::after { content: ""; width: 25px; height: 25px; border-radius: 50%; background: #fff; box-shadow: 0 1px 3px rgba(0, 0, 0, .4); }
.card-email { height: 240px; padding: 28px 30px 0; }
.subcard { margin-top: 21px; height: 150px; border: 1px solid #2e3135; border-radius: 8px; padding: 0 30px; display: flex; justify-content: space-between; }
.sub-title { margin-top: 28px; font-size: 20px; line-height: 28px; font-weight: 600; letter-spacing: -0.35px; }
.sub-btn { margin-top: 32px; width: 147px; height: 45px; border: 1px solid #43484e; border-radius: 7px; background: #212225; }

.scrollbar { width: 21px; background: #424242; display: flex; flex-direction: column; align-items: center; }
.up { margin-top: 9px; border: 5px solid transparent; border-top: 0; border-bottom: 5px solid #fff; }
.thumb { margin-top: 67px; width: 17px; height: 283px; background: #686868; }
.down { margin-top: auto; margin-bottom: 9px; border: 5px solid transparent; border-bottom: 0; border-top: 5px solid #fff; }
.help { position: absolute; left: 1819px; top: 789px; width: 60px; height: 60px; border-radius: 50%; border: 1px solid #2e3135; background: #111113; color: #b0b4ba; font: 600 28px/60px Inter, sans-serif; text-align: center; box-shadow: 0 3px 8px rgba(0, 0, 0, .5); }

/* taskbar */
.taskbar { height: 60px; flex: none; background: #1c1c1c; border-top: 1px solid #404040; padding-bottom: 1px; display: flex; align-items: center; font-size: 14.500px; letter-spacing: -0.3px; }
.weather { width: 585px; display: flex; align-items: center; padding: 0 0 1px 24px; }
.weather-text { margin-left: 5px; display: flex; flex-direction: column; line-height: 20px; letter-spacing: 0.12px; }
.dim { color: #c0c0c0; }
.uv { font: 600 10.500px "Open Sans", sans-serif; fill: #fff; text-anchor: middle; }
.uv-count { font: 14px "Open Sans", sans-serif; fill: #111; text-anchor: middle; }
.tsearch { margin-left: 17px; width: 275px; height: 40px; border-radius: 20px; border: 1px solid #4c4c4c; background: #3a3a3a; display: flex; align-items: center; padding-left: 14px; color: #cfcfcf; font-size: 17px; }
.tsearch span { margin-left: 12px; width: 160px; }
.apps-row { margin-left: 2.500px; display: flex; }
.slot { position: relative; width: 55px; height: 50px; display: flex; align-items: center; justify-content: center; }
.slot.current { width: 50px; margin-left: 2.500px; border-radius: 6px; background: #292929; border: 1px solid #333; }
.dot { position: absolute; bottom: 0; left: 50%; width: 8px; height: 4px; margin-left: -4px; border-radius: 2px; background: #9a9a9a; }
.current .dot { width: 20px; margin-left: -10px; background: #4cc2ff; }
.current em { position: absolute; left: 25px; top: 3px; width: 20px; height: 20px; border-radius: 50%; background: #78909c; color: #e8eef2; font: 11px/20px Roboto, sans-serif; text-align: center; }
.teams { font: 700 12.500px "Open Sans", sans-serif; fill: #fff; text-anchor: middle; }
.tray { margin-left: auto; padding-right: 24px; display: flex; align-items: center; text-align: center; }
.t-up { margin-top: -1px; }
.lang { width: 32px; margin-left: 25px; display: flex; flex-direction: column; line-height: 20px; }
.t-wifi { margin-left: 21px; margin-top: -2px; }
.t-vol { margin-left: 9px; margin-top: -1px; }
.t-bat { margin-left: 10px; margin-top: -4px; }
.clock { width: 90px; padding-bottom: 1px; display: flex; flex-direction: column; line-height: 20px; letter-spacing: 0.2px; text-align: right; }
```
